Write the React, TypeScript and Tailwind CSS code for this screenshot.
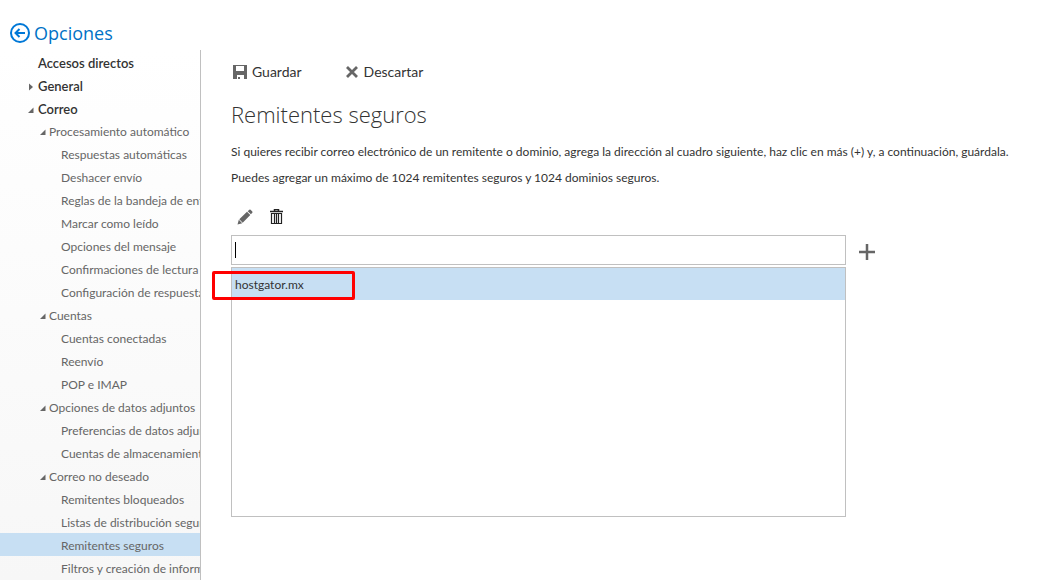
import React, { useState } from 'react';

interface NavItem {
  label: string;
  level: 0 | 1 | 2;
  arrow?: 'open' | 'closed';
}

const NAV_ITEMS: NavItem[] = [
  { label: 'Accesos directos', level: 0 },
  { label: 'General', level: 0, arrow: 'closed' },
  { label: 'Correo', level: 0, arrow: 'open' },
  { label: 'Procesamiento automático', level: 1, arrow: 'open' },
  { label: 'Respuestas automáticas', level: 2 },
  { label: 'Deshacer envío', level: 2 },
  { label: 'Reglas de la bandeja de entrada', level: 2 },
  { label: 'Marcar como leído', level: 2 },
  { label: 'Opciones del mensaje', level: 2 },
  { label: 'Confirmaciones de lectura', level: 2 },
  { label: 'Configuración de respuesta', level: 2 },
  { label: 'Cuentas', level: 1, arrow: 'open' },
  { label: 'Cuentas conectadas', level: 2 },
  { label: 'Reenvío', level: 2 },
  { label: 'POP e IMAP', level: 2 },
  { label: 'Opciones de datos adjuntos', level: 1, arrow: 'open' },
  { label: 'Preferencias de datos adjuntos', level: 2 },
  { label: 'Cuentas de almacenamiento', level: 2 },
  { label: 'Correo no deseado', level: 1, arrow: 'open' },
  { label: 'Remitentes bloqueados', level: 2 },
  { label: 'Listas de distribución seguras', level: 2 },
  { label: 'Remitentes seguros', level: 2 },
  { label: 'Filtros y creación de informes', level: 2 },
];

const LEVEL_CLASSES = {
  0: 'pl-[28px] pt-1 text-[13px] font-semibold text-[#333333]',
  1: 'pl-[40px] pt-0.5 text-[12px] text-[#666666]',
  2: 'pl-[61px] pt-0.5 text-[12px] text-[#666666]',
};

function Arrow({ kind }: { kind?: 'open' | 'closed' }) {
  return (
    <svg viewBox="0 0 6 8" className="h-2 w-1.5 shrink-0" fill="#666666" aria-hidden="true">
      {kind === 'open' && <path d="M5.5 1.5V7H0z" />}
      {kind === 'closed' && <path d="M1 0.5L5 4 1 7.5z" />}
    </svg>
  );
}

function Sidebar() {
  const [selected, setSelected] = useState('Remitentes seguros');

  return (
    <nav className="w-[201px] shrink-0 overflow-hidden border-r border-[#c0c0c0] bg-linear-to-b from-white to-[#f7f7f7]">
      <ul>
        {NAV_ITEMS.map(item => (
          <li key={item.label}>
            <a
              href="#"
              onClick={() => setSelected(item.label)}
              className={`flex h-[23px] items-center whitespace-nowrap ${LEVEL_CLASSES[item.level]} ${
                selected === item.label ? 'bg-[#c7dff3]' : ''
              }`}
            >
              {item.level < 2 && (
                <span className={item.level === 0 ? 'flex w-[10px] shrink-0' : 'flex w-[9px] shrink-0'}>
                  <Arrow kind={item.arrow} />
                </span>
              )}
              {item.label}
            </a>
          </li>
        ))}
      </ul>
    </nav>
  );
}

function SafeSenders() {
  const [value, setValue] = useState('');
  const [senders, setSenders] = useState(['hostgator.mx']);

  const addSender = () => {
    if (!value.trim()) return;
    setSenders([...senders, value.trim()]);
    setValue('');
  };

  return (
    <main className="min-w-0 flex-1 pl-[30px] pt-3 text-[#333333]">
      <div className="flex gap-[43px] text-[14px] leading-5">
        <button type="button" className="flex items-center gap-[5px]">
          <svg viewBox="0 0 16 16" className="size-4" aria-hidden="true">
            <path fill="#666666" fillRule="evenodd" d="M2 1h14v14H13v-4H6v4H2zM5 2v5h8V2z" />
            <path fill="#666666" d="M7 13h2v2H7z" />
          </svg>
          Guardar
        </button>
        <button type="button" className="flex items-center gap-[5px]">
          <svg viewBox="0 0 14 14" className="size-3.5" aria-hidden="true">
            <path stroke="#666666" strokeWidth="2.8" d="M2 2l10 10M12 2L2 12" />
          </svg>
          Descartar
        </button>
      </div>

      <h2 className="mt-4 font-['Open_Sans','Noto_Sans',sans-serif] text-[22px] font-light leading-8">
        Remitentes seguros
      </h2>

      <p className="mt-[13px] text-[12px] leading-[18px]">
        Si quieres recibir correo electrónico de un remitente o dominio, agrega la dirección al cuadro siguiente, haz clic en más (+) y, a continuación, guárdala.
      </p>
      <p className="mt-2 text-[12px] leading-[18px]">
        Puedes agregar un máximo de 1024 remitentes seguros y 1024 dominios seguros.
      </p>

      <div className="mt-[22px] flex gap-[15px] pl-1.5">
        <button type="button" aria-label="Editar">
          <svg viewBox="0 0 16 16" className="size-4" fill="#666666" aria-hidden="true">
            <path d="M0.5 15.5L1.800 10.800 5.200 14.200zM2.300 10.300L10 2.800l3.300 3.300-7.600 7.600zM10.700 2.200L12.300 0.700q0.700-0.500 1.300 0l1.700 1.700q0.500 0.600 0 1.300L13.900 5.300z" />
          </svg>
        </button>
        <button type="button" aria-label="Eliminar">
          <svg viewBox="0 0 16 16" className="size-4" fill="none" stroke="#222222" aria-hidden="true">
            <path d="M6.500 2V0.500h4V2M2 2.500h13" strokeWidth="1.500" />
            <path d="M3.500 4.500h10v10h-10zM6.500 5v9M8.500 5v9M10.500 5v9" strokeWidth="1.200" />
          </svg>
        </button>
      </div>

      <div className="mt-2.5 flex items-center gap-3">
        <div className="relative w-full max-w-[615px]">
          <input
            type="text"
            aria-label="Remitente o dominio"
            value={value}
            onChange={e => setValue(e.target.value)}
            className="peer block h-[30px] w-full border border-[#c0c0c0] bg-white px-[3px] text-[12px] outline-none"
          />
          <span className="pointer-events-none absolute left-1 top-[7px] h-4 w-px bg-black peer-focus:hidden" />
        </div>
        <button type="button" aria-label="Agregar" onClick={addSender} className="mt-1">
          <svg viewBox="0 0 18 18" className="size-[18px]" aria-hidden="true">
            <path stroke="#666666" strokeWidth="2.500" d="M1 9h16M9 1v16" />
          </svg>
        </button>
      </div>

      <ul className="mt-0.5 h-[250px] max-w-[615px] border border-[#c0c0c0] text-[12px]">
        {senders.map((sender, i) => (
          <li
            key={sender}
            className={`relative flex h-8 items-center px-[3px] pt-0.5 ${i === 0 ? 'bg-[#c7dff3]' : ''}`}
          >
            {sender}
            {i === 0 && (
              <span className="absolute -left-5 top-[3px] h-[29px] w-[143px] rounded-[2px] border-3 border-[#ff0000]" />
            )}
          </li>
        ))}
      </ul>
    </main>
  );
}

export default function App() {
  return (
    <div className="flex h-screen flex-col overflow-hidden bg-white font-['Lato','Open_Sans',sans-serif]">
      <header className="flex h-[50px] shrink-0 items-center pl-[9px] pt-[15px]">
        <a
          href="#"
          className="flex items-center gap-[3px] font-['Open_Sans','Noto_Sans',sans-serif] text-[18px] leading-7 text-[#0072c6]"
        >
          <svg viewBox="0 0 22 22" className="size-[22px]" fill="none" stroke="#0078d7" aria-hidden="true">
            <circle cx="11" cy="11" r="9" strokeWidth="2" />
            <path d="M16 11H7M10.500 7L6.500 11l4 4" strokeWidth="2" />
          </svg>
          <h1>Opciones</h1>
        </a>
      </header>
      <div className="flex min-h-0 flex-1">
        <Sidebar />
        <SafeSenders />
      </div>
    </div>
  );
}
